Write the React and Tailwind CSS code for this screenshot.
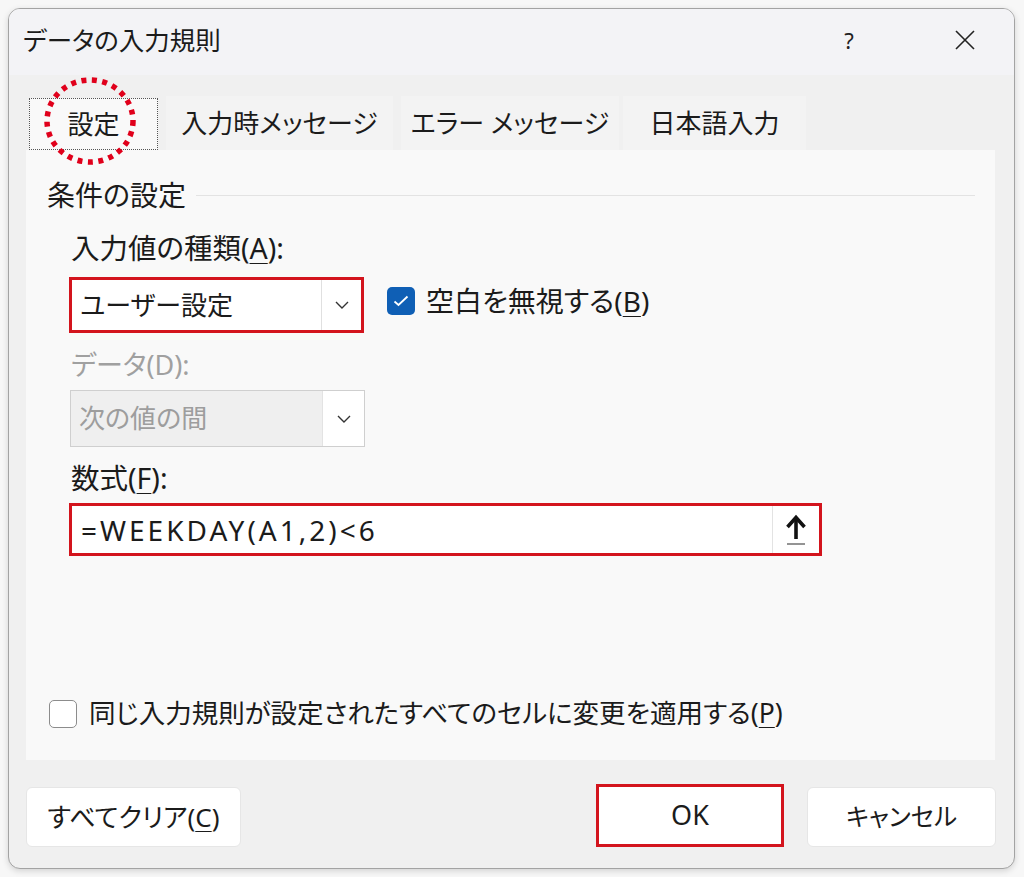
import React from 'react';

const font = "font-['Noto_Sans','Noto_Sans_CJK_JP',sans-serif] [font-feature-settings:'palt']";

function Chevron({ className = '' }) {
  return (
    <svg width="16" height="10" viewBox="0 0 16 10" className={className}>
      <path d="M2 2 L8 8 L14 2" fill="none" stroke="#333" strokeWidth="1.4" />
    </svg>
  );
}

function CheckBox({ checked }) {
  if (checked) {
    return (
      <div className="w-[28px] h-[28px] rounded-[5px] bg-[#0f5fb5] flex items-center justify-center shrink-0">
        <svg width="16" height="12" viewBox="0 0 16 12">
          <path d="M1.5 6.5 L5.5 10 L14.5 1.5" fill="none" stroke="white" strokeWidth="1.8" />
        </svg>
      </div>
    );
  }
  return <div className="w-[28px] h-[28px] rounded-[5px] bg-white border-[1.5px] border-[#8c8c8c] shrink-0" />;
}

function Tab({ label, w, selected, ml }) {
  return (
    <div
      className={`h-[52px] flex items-center justify-center text-[26px] text-[#1b1b1b] ${w} ${ml} ${
        selected ? 'bg-[#f9f9f9] border border-dotted border-[#555]' : 'bg-[#f3f3f3] mt-[-3px] h-[54px]'
      }`}
    >
      {label}
    </div>
  );
}

export default function App() {
  return (
    <div className={`w-[1024px] h-[877px] bg-[#f7f7f7] pt-[8px] pl-[8px] ${font}`}>
      <div className="relative w-[1007px] h-[861px] rounded-[12px] border border-[#a3a3a3] bg-[#f0f0f0] overflow-hidden shadow-[0_2px_6px_rgba(0,0,0,0.15)] flex flex-col">
        {/* title bar */}
        <div className="h-[66px] bg-[#f3f3f6] flex items-center pl-[14px] shrink-0">
          <div className="text-[25.5px] text-[#1b1b1b] leading-none mt-[-2px]">データの入力規則</div>
          <div className="ml-auto w-[40px] text-center text-[22px] text-[#222] mr-[76px] mt-[-4px]">?</div>
          <div className="w-[40px] flex justify-center mr-[29px] mt-[-4px]">
            <svg width="22" height="22" viewBox="0 0 22 22">
              <path d="M2 2 L20 20 M20 2 L2 20" stroke="#222" strokeWidth="1.6" fill="none" />
            </svg>
          </div>
        </div>

        {/* tabs */}
        <div className="flex items-end mt-[23px] pl-[20px] shrink-0">
          <Tab label="設定" w="w-[129px]" selected ml="" />
          <Tab label="入力時メッセージ" w="w-[227px]" ml="ml-[8px]" />
          <Tab label="エラー メッセージ" w="w-[218px]" ml="ml-[8px]" />
          <Tab label="日本語入力" w="w-[183px]" ml="ml-[4px]" />
        </div>

        {/* panel */}
        <div className="ml-[17px] mr-[19px] h-[610px] bg-[#f9f9f9] flex flex-col shrink-0">
          <div className="mt-[28px] h-[34px] flex items-center pl-[21px]">
            <span className="text-[28px] text-[#1b1b1b]">条件の設定</span>
            <div className="flex-1 h-px bg-[#e3e3e3] ml-[10px] mr-[20px]" />
          </div>

          <div className="mt-[19px] h-[34px] flex items-center pl-[45px] text-[28.5px] text-[#1b1b1b]">
            入力値の種類(<span className="underline underline-offset-4 decoration-1">A</span>):
          </div>

          <div className="mt-[12px] flex items-center pl-[43px]">
            <div className="w-[295px] h-[56px] bg-white border-[3px] border-[#d3141d] flex">
              <div className="flex-1 flex items-center pl-[8px] text-[26px] text-[#1b1b1b]">ユーザー設定</div>
              <div className="w-[40px] border-l border-[#e0e0e0] flex items-center justify-center">
                <Chevron />
              </div>
            </div>
            <div className="ml-[23px] flex items-center mt-[-8px]">
              <CheckBox checked />
              <span className="ml-[11px] text-[28px] text-[#1b1b1b]">
                空白を無視する(<span className="underline underline-offset-4 decoration-1">B</span>)
              </span>
            </div>
          </div>

          <div className="mt-[15px] h-[34px] flex items-center pl-[45px] text-[27px] text-[#a0a0a0]">データ(D):</div>

          <div className="mt-[8px] pl-[44px]">
            <div className="w-[295px] h-[57px] bg-[#efefef] border border-[#cfcfcf] flex">
              <div className="flex-1 flex items-center pl-[8px] text-[26px] text-[#9d9d9d]">次の値の間</div>
              <div className="w-[42px] bg-white border-l border-[#e3e3e3] flex items-center justify-center">
                <Chevron />
              </div>
            </div>
          </div>

          <div className="mt-[14px] h-[34px] flex items-center pl-[45px] text-[28.5px] text-[#1b1b1b]">
            数式(<span className="underline underline-offset-4 decoration-1">F</span>):
          </div>

          <div className="mt-[8px] pl-[43px]">
            <div className="w-[753px] h-[53px] bg-white border-[3px] border-[#d3141d] flex">
              <div className="flex-1 flex items-center pl-[9px] text-[28px] tracking-[3px] text-[#1b1b1b] font-['Noto_Sans',sans-serif]">
                =WEEKDAY(A1,2)&lt;6
              </div>
              <div className="w-[47px] border-l border-[#e3e3e3] flex items-center justify-center">
                <svg width="24" height="32" viewBox="0 0 24 32">
                  <path d="M12 5 L12 25" stroke="#111" strokeWidth="3.6" />
                  <path d="M3.5 13 L12 3.5 L20.5 13" fill="none" stroke="#111" strokeWidth="3.6" />
                  <path d="M3 30 L21 30" stroke="#666" strokeWidth="1.4" />
                </svg>
              </div>
            </div>
          </div>

          <div className="mt-auto mb-[29px] h-[34px] flex items-center pl-[23px]">
            <CheckBox />
            <span className="ml-[12px] text-[26.5px] text-[#1b1b1b]">
              同じ入力規則が設定されたすべてのセルに変更を適用する(<span className="underline underline-offset-4 decoration-1">P</span>)
            </span>
          </div>
        </div>

        {/* buttons */}
        <div className="mt-[27px] flex items-center pl-[17px] pr-[18px]">
          <div className="w-[215px] h-[60px] bg-white rounded-[6px] border border-[#e6e6e6] flex items-center justify-center text-[26px] text-[#1b1b1b]">
            すべてクリア(<span className="underline underline-offset-4 decoration-1">C</span>)
          </div>
          <div className="ml-auto w-[188px] h-[63px] mt-[-4px] bg-white border-[3px] border-[#d3141d] flex items-center justify-center text-[27px] text-[#1b1b1b]">
            OK
          </div>
          <div className="ml-[23px] w-[189px] h-[60px] bg-white rounded-[6px] border border-[#e6e6e6] flex items-center justify-center text-[24.5px] text-[#1b1b1b]">
            キャンセル
          </div>
        </div>

        {/* red dotted annotation circle around the selected tab */}
        <svg className="absolute left-[34px] top-[66px] pointer-events-none" width="94" height="92" viewBox="0 0 94 92">
          <ellipse cx="47" cy="46" rx="43" ry="41" fill="none" stroke="#e0001b" strokeWidth="5.5" strokeDasharray="5 5.5" />
        </svg>
      </div>
    </div>
  );
}
